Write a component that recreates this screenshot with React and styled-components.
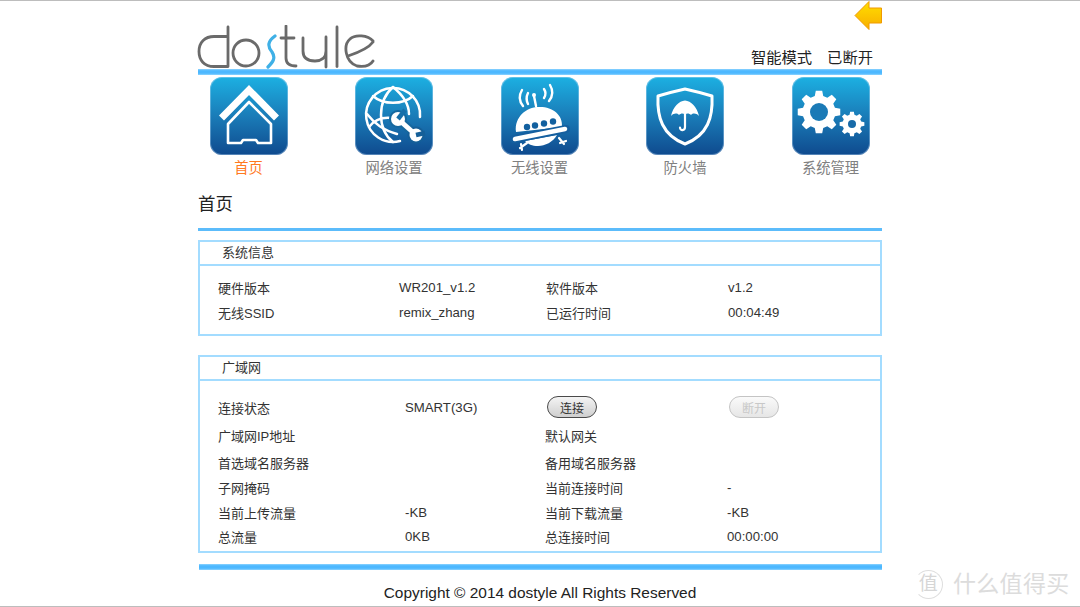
import React from "react";
import styled, { createGlobalStyle } from "styled-components";

const Global = createGlobalStyle`
  html, body { margin: 0; padding: 0; background: #fff; }
  body { font-family: "Liberation Sans", "Noto Sans CJK SC", Arial, sans-serif; color: #333; }
`;

const Page = styled.div`
  position: relative;
  box-sizing: border-box;
  width: 1080px;
  height: 607px;
  overflow: hidden;
  border-top: 1px solid #bdbdbd;
  border-bottom: 1px solid #bdbdbd;
`;
const Wrapper = styled.div`
  width: 684px;
  margin: 0 auto 0 198px;
`;
const Header = styled.header`
  height: 68px;
  display: flex;
  justify-content: space-between;
  align-items: flex-end;
`;
const LogoMark = styled.svg`
  display: block;
  margin-left: -1px;
`;
const HeaderRight = styled.div`
  height: 68px;
  display: flex;
  flex-direction: column;
  justify-content: space-between;
  align-items: flex-end;
`;
const Back = styled.svg`
  display: block;
`;
const Status = styled.div`
  display: flex;
  gap: 15px;
  padding-right: 9px;
  padding-bottom: 1px;
  font-size: 15.3px;
  line-height: 20px;
  color: #222;
`;
const Bar = styled.div`
  height: 6px;
  margin-left: ${(p) => p.$inset || 0}px;
  margin-top: ${(p) => p.$top || 0}px;
  background: linear-gradient(#8fd4ff, #4db8ff 30%, #4db8ff 70%, #8fd4ff);
`;
const Nav = styled.nav`
  display: flex;
  justify-content: space-between;
  padding: 2px 12.5px 0 11.5px;
`;
const NavItem = styled.div`
  width: 78px;
  display: flex;
  flex-direction: column;
  align-items: center;
`;
const IconBox = styled.div`
  width: 78px;
  height: 78px;
  border-radius: 12px;
  background: linear-gradient(#1cb0e2, #1a7cb8 50%, #0f4a8e);
  box-shadow: inset 0 0 0 1px rgba(190, 220, 245, 0.4);
  overflow: hidden;
`;
const NavLabel = styled.div`
  margin-top: 3px;
  font-size: 14.3px;
  line-height: 20px;
  white-space: nowrap;
  color: ${(p) => (p.$active ? "#ff7a1f" : "#808080")};
`;
const Title = styled.h1`
  margin: 14px 0 0 0;
  font-size: 17.4px;
  line-height: 24px;
  font-weight: 400;
  color: #222;
`;
const Rule = styled.div`
  height: 3px;
  margin-top: 12px;
  background: #5cbcfb;
`;
const Panel = styled.section`
  box-sizing: border-box;
  height: ${(p) => p.$height}px;
  margin-top: ${(p) => p.$top}px;
  border: 2px solid #a3dcff;
`;
const PanelHead = styled.div`
  box-sizing: border-box;
  height: 24px;
  padding-left: 22px;
  border-bottom: 2px solid #a3dcff;
  font-size: 13px;
  line-height: 22px;
  color: #333;
`;
const PanelBody = styled.div`
  padding: ${(p) => p.$top}px 0 0 18px;
`;
const Row = styled.div`
  display: grid;
  grid-template-columns: ${(p) => p.$cols};
  height: ${(p) => p.$h}px;
  align-items: center;
  font-size: 13px;
  color: #333;
`;
const Value = styled.span`
  font-size: 13.2px;
  color: #333;
`;
const Pill = styled.button`
  box-sizing: border-box;
  display: block;
  width: 50px;
  height: 22px;
  padding: 0;
  margin-left: 2px;
  border-radius: 11px;
  border: 1px solid ${(p) => (p.disabled ? "#c4c4c4" : "#4a4a4a")};
  background: ${(p) => (p.disabled ? "linear-gradient(#fafafa, #e6e6e6)" : "linear-gradient(#f4f4f4, #cfcfcf)")};
  font: 12px "Liberation Sans", "Noto Sans CJK SC", sans-serif;
  color: ${(p) => (p.disabled ? "#c8c8c8" : "#333")};
`;
const Copyright = styled.footer`
  margin-top: 11px;
  text-align: center;
  font-size: 15.45px;
  line-height: 24px;
  color: #222;
`;
const Watermark = styled.div`
  position: absolute;
  left: 914px;
  bottom: 7px;
  display: flex;
  align-items: center;
  gap: 10px;
  color: #dcdcdc;
  font-size: 23px;
  line-height: 30px;
  letter-spacing: 0.3px;
`;
const WaterBadge = styled.span`
  box-sizing: border-box;
  width: 29px;
  height: 29px;
  border-radius: 50%;
  border: 1px solid #dedede;
  border-left-color: transparent;
  display: flex;
  align-items: center;
  justify-content: center;
  font-size: 19px;
  color: #d6d6d6;
`;
const Glyph = styled.svg`
  display: block;
`;

const W = { fill: "none", stroke: "#fff", strokeLinecap: "round", strokeLinejoin: "round" };

function gearPath(cx, cy, R, r, teeth) {
  let d = "";
  const step = (Math.PI * 2) / teeth;
  for (let i = 0; i < teeth; i++) {
    const a = i * step;
    const pts = [
      [r, a - step * 0.33],
      [R, a - step * 0.19],
      [R, a + step * 0.19],
      [r, a + step * 0.33],
    ];
    pts.forEach(([rad, ang], j) => {
      const x = (cx + rad * Math.cos(ang)).toFixed(2);
      const y = (cy + rad * Math.sin(ang)).toFixed(2);
      d += `${i === 0 && j === 0 ? "M" : "L"}${x} ${y} `;
    });
  }
  return d + "Z";
}

const HouseIcon = () => (
  <Glyph width="78" height="78" viewBox="0 0 78 78">
    <path {...W} strokeWidth="7" strokeLinecap="butt" strokeLinejoin="miter" d="M11.5 41 L39 13 L66.5 41" />
    <path {...W} strokeWidth="2.6" d="M39 25 L18 47 V66 H31 L33 63 H46 L48 66 H61 V47 Z" />
  </Glyph>
);

const GlobeIcon = () => (
  <Glyph width="78" height="78" viewBox="0 0 78 78">
    <g {...W} strokeWidth="2.5">
      <path d="M45 64 A27 27 0 1 1 65 40" />
      <path d="M38 10 C22 24 22 52 38 65" />
      <path d="M38 10 C49 19 54 29 54 37" />
      <path d="M18 19 C28 28 48 28 58 19" />
      <path d="M14 50 C20 42 29 40 37 41" />
      <path d="M12 37 C20 47 28 53 42 57" />
    </g>
    <path stroke="#16689f" strokeWidth="9" strokeLinecap="round" d="M43 42 L61 58" />
    <circle cx="43" cy="42" r="9" fill="#16689f" />
    <circle cx="61" cy="58" r="8.5" fill="#155f98" />
    <path stroke="#fff" strokeWidth="5" d="M43 42 L61 58" />
    <circle cx="43" cy="42" r="7" fill="#fff" />
    <circle cx="61" cy="58" r="6.5" fill="#fff" />
    <path stroke="#176fa9" strokeWidth="4.5" d="M43 42 L50 33" />
    <path stroke="#155f98" strokeWidth="4.5" d="M61 58 L70 56" />
  </Glyph>
);

const UfoIcon = () => (
  <Glyph width="78" height="78" viewBox="0 0 78 78">
    <g {...W} strokeWidth="2.4">
      <path d="M21 13 C18 18 18 24 22 29" />
      <path d="M27 16 C25 20 25 23 27 27" />
      <path d="M49 8 C52 13 52 19 48 24" />
      <path d="M43 12 C45 15 45 18 43 21" />
      <path d="M33 19 L35 29" />
    </g>
    <circle cx="33" cy="18" r="2" fill="#fff" />
    <path fill="#fff" d="M15 55 C13 39 27 29 39 30 C52 30 62 38 61 50 Z" />
    <path fill="#fff" d="M24 64 L56 58 C52 65 44 69 37 69 C31 69 27 67 24 64 Z" />
    <path stroke="#155f9f" strokeWidth="8" strokeLinecap="round" d="M13 62 L65 52" />
    <path {...W} strokeWidth="4.6" d="M14 62 L64 52" />
    <g fill="#12609f">
      <circle cx="26" cy="50" r="3.2" />
      <circle cx="34" cy="48.5" r="3.2" />
      <circle cx="43" cy="46.5" r="3.2" />
      <circle cx="52" cy="44.5" r="3.2" />
    </g>
    <path {...W} strokeWidth="2.2" d="M19 71 L26 66 M20 67 L21 73 M58 61 L63 67 M59 66 L65 64" />
  </Glyph>
);

const ShieldIcon = () => (
  <Glyph width="78" height="78" viewBox="0 0 78 78">
    <path {...W} strokeWidth="3" d="M12 19 C22 16 30 14 39 12 C48 14 56 16 66 19 C67 40 62 58 39 67 C16 58 11 40 12 19 Z" />
    <path fill="#fff" d="M25 39 C27 30 33 24 39 23.5 C45 24 51 30 53 39 C50 36 47 36 45 38 C43 36 41 36 39 37.5 C37 36 35 36 33 38 C31 36 28 36 25 39 Z" />
    <path {...W} strokeWidth="2.2" d="M39 36 V50 C39 54 34 54 34 50.5" />
  </Glyph>
);

const GearsIcon = () => (
  <Glyph width="78" height="78" viewBox="0 0 78 78">
    <path fill="#fff" d={gearPath(27, 35, 21.5, 16.5, 8)} />
    <circle cx="27" cy="35" r="9" fill="#1a7ab6" />
    <path fill="#fff" d={gearPath(60, 47, 12.5, 9.5, 8)} />
    <circle cx="60" cy="47" r="4" fill="#176aa8" />
  </Glyph>
);

const Logo = () => (
  <LogoMark width="180" height="44" viewBox="0 0 180 44">
    <g fill="none" stroke="#6a6a6a" strokeWidth="2.8" strokeLinecap="round" strokeLinejoin="round">
      <path d="M31 2 V41.5 H17 C7 41.5 2 35 2 26.5 C2 17 8 11.5 17 11.5 H31" />
      <circle cx="49" cy="28" r="13" />
      <path d="M89 1 V33 C89 38 92 41 99 41" />
      <path d="M84 13 H97" />
      <path d="M106 13 V26 C106 33 111 36 118 36 C124 36 129 33 129 26 V12 M129 26 V42" />
      <path d="M140 2 V41.5" />
      <path d="M176 16 C171 10 158 9 153 14 C146 20 148 37 160 41 C167 42 173 41 176 36 M176 17 C171 24 160 28 151 31" />
    </g>
    <path fill="none" stroke="#3fb0e6" strokeWidth="3.2" strokeLinecap="round" d="M78 11 C71 16 70 21 75 27 C79 33 76 37 71 42" />
  </LogoMark>
);

const NAV = [
  ["首页", HouseIcon, true],
  ["网络设置", GlobeIcon],
  ["无线设置", UfoIcon],
  ["防火墙", ShieldIcon],
  ["系统管理", GearsIcon],
];

const SYS_COLS = "181px 147px 182px 1fr";
const WAN_COLS = "187px 140px 182px 1fr";

export default function App() {
  return (
    <Page>
      <Global />
      <Wrapper>
        <Header>
          <Logo />
          <HeaderRight>
            <Back width="28" height="30" viewBox="0 0 28 30">
              <defs>
                <linearGradient id="arrow" x1="0" y1="0" x2="0" y2="1">
                  <stop offset="0" stopColor="#ffdf00" />
                  <stop offset="1" stopColor="#f8ad00" />
                </linearGradient>
              </defs>
              <path fill="url(#arrow)" stroke="#f09a00" strokeWidth="1" d="M1 14.5 L15 0.5 V7 H27.5 V22 H15 V28.5 Z" />
            </Back>
            <Status>
              <span>智能模式</span>
              <span>已断开</span>
            </Status>
          </HeaderRight>
        </Header>
        <Bar />
        <Nav>
          {NAV.map(([label, Icon, active]) => (
            <NavItem key={label}>
              <IconBox>
                <Icon />
              </IconBox>
              <NavLabel $active={active}>{label}</NavLabel>
            </NavItem>
          ))}
        </Nav>
        <Title>首页</Title>
        <Rule />
        <Panel $height={96} $top={9}>
          <PanelHead>系统信息</PanelHead>
          <PanelBody $top={9}>
            <Row $cols={SYS_COLS} $h={25}>
              <span>硬件版本</span>
              <Value>WR201_v1.2</Value>
              <span>软件版本</span>
              <Value>v1.2</Value>
            </Row>
            <Row $cols={SYS_COLS} $h={25}>
              <span>无线SSID</span>
              <Value>remix_zhang</Value>
              <span>已运行时间</span>
              <Value>00:04:49</Value>
            </Row>
          </PanelBody>
        </Panel>
        <Panel $height={198} $top={19}>
          <PanelHead>广域网</PanelHead>
          <PanelBody $top={12}>
            <Row $cols={WAN_COLS} $h={28}>
              <span>连接状态</span>
              <Value>SMART(3G)</Value>
              <span>
                <Pill type="button">连接</Pill>
              </span>
              <span>
                <Pill type="button" disabled>断开</Pill>
              </span>
            </Row>
            <Row $cols={WAN_COLS} $h={28}>
              <span>广域网IP地址</span>
              <Value />
              <span>默认网关</span>
              <Value />
            </Row>
            <Row $cols={WAN_COLS} $h={26}>
              <span>首选域名服务器</span>
              <Value />
              <span>备用域名服务器</span>
              <Value />
            </Row>
            <Row $cols={WAN_COLS} $h={25}>
              <span>子网掩码</span>
              <Value />
              <span>当前连接时间</span>
              <Value>-</Value>
            </Row>
            <Row $cols={WAN_COLS} $h={24}>
              <span>当前上传流量</span>
              <Value>-KB</Value>
              <span>当前下载流量</span>
              <Value>-KB</Value>
            </Row>
            <Row $cols={WAN_COLS} $h={24}>
              <span>总流量</span>
              <Value>0KB</Value>
              <span>总连接时间</span>
              <Value>00:00:00</Value>
            </Row>
          </PanelBody>
        </Panel>
        <Bar $inset={1} $top={11} />
        <Copyright>Copyright © 2014 dostyle All Rights Reserved</Copyright>
      </Wrapper>
      <Watermark>
        <WaterBadge>值</WaterBadge>
        <span>什么值得买</span>
      </Watermark>
    </Page>
  );
}
